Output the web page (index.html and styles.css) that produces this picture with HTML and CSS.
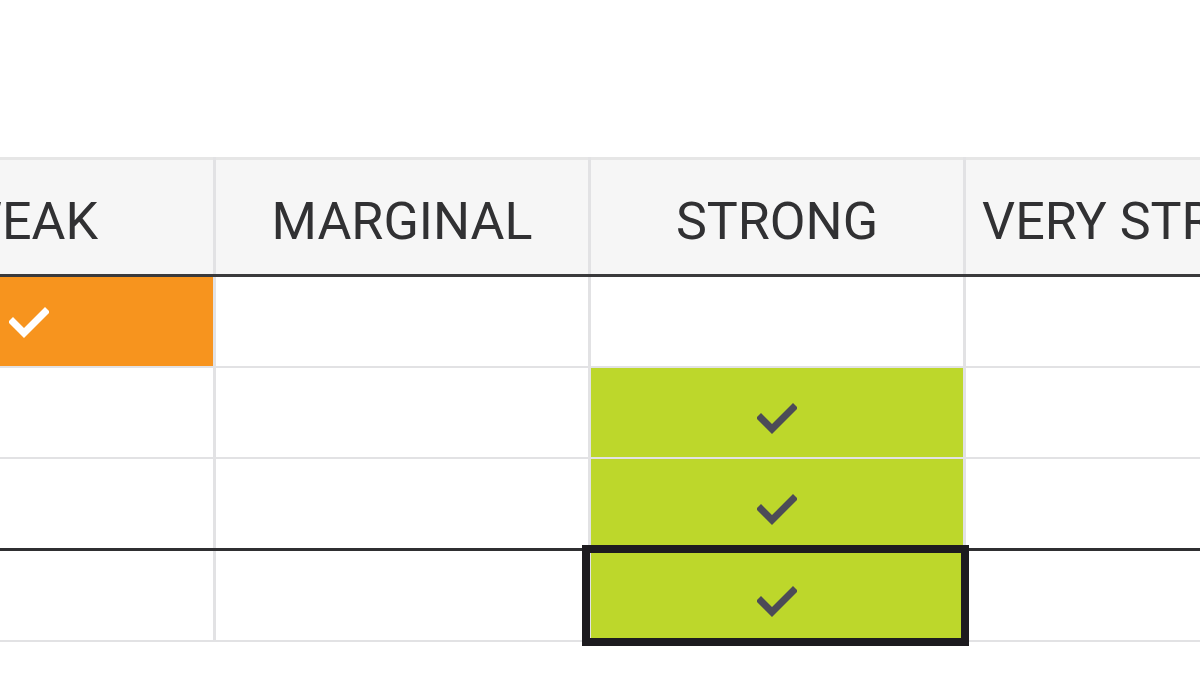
FILE: index.html
```html
<!DOCTYPE html>
<html lang="en">
<head>
<meta charset="utf-8">
<title>Rating</title>
<link rel="stylesheet" href="styles.css">
</head>
<body>
<div class="frame">
  <table class="rating">
    <colgroup>
      <col class="col"><col class="col"><col class="col"><col class="col">
    </colgroup>
    <thead>
      <tr>
        <th>WEAK</th>
        <th>MARGINAL</th>
        <th>STRONG</th>
        <th>VERY STRONG</th>
      </tr>
    </thead>
    <tbody>
      <tr>
        <td class="weak"><svg class="check white" viewBox="0 0 40 34"><polyline points="4,17 15,28 36,7"/></svg></td>
        <td></td>
        <td></td>
        <td></td>
      </tr>
      <tr>
        <td></td>
        <td></td>
        <td class="strong"><svg class="check" viewBox="0 0 40 34"><polyline points="4,17 15,28 36,7"/></svg></td>
        <td></td>
      </tr>
      <tr class="group-end">
        <td></td>
        <td></td>
        <td class="strong"><svg class="check" viewBox="0 0 40 34"><polyline points="4,17 15,28 36,7"/></svg></td>
        <td></td>
      </tr>
      <tr>
        <td></td>
        <td></td>
        <td class="strong selected"><svg class="check" viewBox="0 0 40 34"><polyline points="4,17 15,28 36,7"/></svg></td>
        <td></td>
      </tr>
    </tbody>
  </table>
</div>
</body>
</html>
```

FILE: styles.css
```css
html, body {
  margin: 0;
  padding: 0;
  background: #ffffff;
  overflow: hidden;
}

.frame {
  width: 1200px;
  height: 675px;
  overflow: hidden;
  padding-top: 157px;
  box-sizing: border-box;
}

.rating {
  width: 1500px;
  min-width: 1500px;
  margin-left: -162px;
  border-collapse: collapse;
  table-layout: fixed;
  font-family: "Roboto", "Liberation Sans", sans-serif;
}

.rating .col {
  width: 375px;
}

.rating th,
.rating td {
  padding: 0;
  text-align: center;
  vertical-align: middle;
  white-space: nowrap;
  border-left: 3px solid #e2e2e4;
  border-right: 3px solid #e2e2e4;
  border-top: 2px solid #e2e2e4;
  border-bottom: 2px solid #e2e2e4;
}

.rating th {
  height: 106px;
  padding-top: 8px;
  background: #f6f6f6;
  color: #313133;
  font-weight: 400;
  font-size: 52px;
  letter-spacing: 0;
  border-top: 3px solid #e6e6e6;
  border-bottom: 3px solid #3a3a3c;
}

.rating td {
  height: 89px;
  background: #ffffff;
}

.rating tr.group-end td {
  border-bottom: 3px solid #2f2f31;
}

.rating td.weak {
  background: #f7941e;
  text-align: left;
  padding-left: 168px;
}

.rating td.strong {
  background: #bdd72b;
  height: 79px;
  padding-top: 10px;
}

.rating td.selected {
  position: relative;
}

.rating td.selected::after {
  content: "";
  position: absolute;
  left: -9px;
  right: -6px;
  top: -6px;
  bottom: -6px;
  border: 8px solid #1d1b1f;
  pointer-events: none;
}

.check {
  width: 40px;
  height: 34px;
  display: inline-block;
  vertical-align: middle;
}

.check polyline {
  fill: none;
  stroke: #4c4b57;
  stroke-width: 7;
  stroke-linecap: square;
  stroke-linejoin: miter;
}

.check.white polyline {
  stroke: #ffffff;
}
```
